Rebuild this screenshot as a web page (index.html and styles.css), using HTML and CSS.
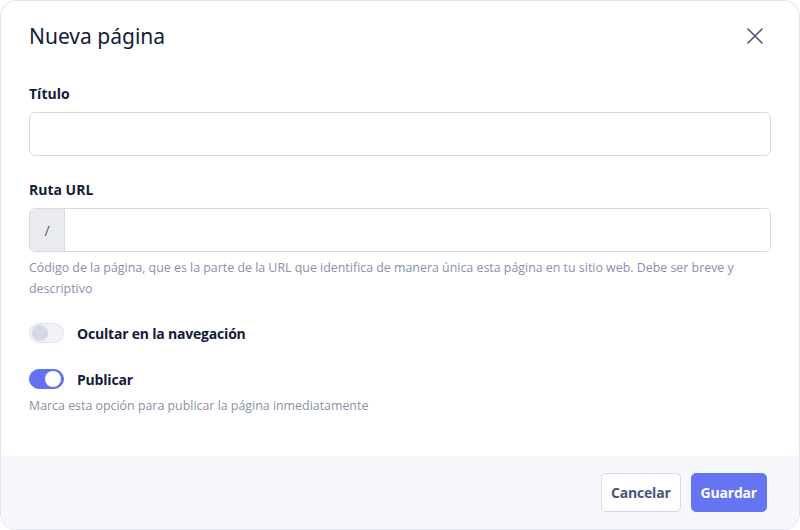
FILE: index.html
```html
<!DOCTYPE html>
<html lang="es">
<head>
    <meta charset="UTF-8">
    <meta name="viewport" content="width=device-width, initial-scale=1.0">
    <title>Nueva página</title>
    <link rel="stylesheet" href="styles.css">
</head>
<body>
    <div class="modal">
        <div class="modal-header">
            <h1>Nueva página</h1>
            <button class="close-btn" aria-label="Cerrar">
                <svg width="18" height="18" viewBox="0 0 18 18" fill="none" stroke="#4a5578" stroke-width="1.6" stroke-linecap="round">
                    <path d="M2 2 L16 16 M16 2 L2 16"/>
                </svg>
            </button>
        </div>

        <div class="modal-body">
            <div class="form-group">
                <label for="titulo">Título</label>
                <input type="text" id="titulo" class="text-input">
            </div>

            <div class="form-group">
                <label for="ruta">Ruta URL</label>
                <div class="input-addon">
                    <span class="addon">/</span>
                    <input type="text" id="ruta">
                </div>
                <p class="help">Código de la página, que es la parte de la URL que identifica de manera única esta página en tu sitio web. Debe ser breve y descriptivo</p>
            </div>

            <div class="toggle-row">
                <span class="toggle"><span class="knob"></span></span>
                <span class="toggle-label">Ocultar en la navegación</span>
            </div>

            <div class="toggle-row on">
                <span class="toggle"><span class="knob"></span></span>
                <span class="toggle-label">Publicar</span>
            </div>
            <p class="help">Marca esta opción para publicar la página inmediatamente</p>
        </div>

        <div class="modal-footer">
            <button class="btn btn-cancel">Cancelar</button>
            <button class="btn btn-save">Guardar</button>
        </div>
    </div>
</body>
</html>
```

FILE: styles.css
```css
* {
    box-sizing: border-box;
    font-family: 'Open Sans', 'Noto Sans', sans-serif;
}

body {
    margin: 0;
    padding: 0;
    background: #ffffff;
}

.modal {
    width: 800px;
    height: 530px;
    border: 1px solid #e1e3ee;
    border-radius: 16px;
    background: white;
    overflow: hidden;
    display: flex;
    flex-direction: column;
}

.modal-header {
    display: flex;
    justify-content: space-between;
    align-items: center;
    padding: 10px 35px 0 28px;
    height: 60px;
}

.modal-header h1 {
    margin: 0;
    font-family: 'Noto Sans', sans-serif;
    font-weight: 400;
    font-size: 21px;
    color: #141b38;
}

.close-btn {
    background: none;
    border: none;
    padding: 0;
    cursor: pointer;
    display: flex;
}

.modal-body {
    padding: 23px 28px 0 28px;
    flex: 1;
}

.form-group {
    margin-bottom: 24px;
}

.form-group label {
    display: block;
    font-size: 14px;
    font-weight: 700;
    color: #141b38;
    margin-bottom: 8px;
    line-height: 20px;
}

.text-input,
.input-addon {
    width: 100%;
    height: 44px;
    border: 1px solid #d6d9e8;
    border-radius: 6px;
    background: white;
}

.input-addon {
    display: flex;
    overflow: hidden;
}

.addon {
    width: 35px;
    background: #e9ebf0;
    border-right: 1px solid #d6d9e8;
    display: flex;
    align-items: center;
    justify-content: center;
    color: #4a5578;
    font-size: 14px;
}

.input-addon input {
    flex: 1;
    border: none;
    outline: none;
}

.help {
    margin: 5px 0 0 0;
    font-size: 12.4px;
    line-height: 21px;
    color: #8a90a8;
}

.toggle-row {
    display: flex;
    align-items: center;
    gap: 13px;
    margin-bottom: 26px;
}

.toggle-row.on {
    margin-bottom: 0;
}

.toggle {
    width: 35px;
    height: 20px;
    border-radius: 10px;
    background: #f1f2f7;
    border: 1px solid #dfe2ec;
    display: flex;
    align-items: center;
    padding: 0 2px;
}

.knob {
    width: 16px;
    height: 16px;
    border-radius: 50%;
    background: #d5d8e5;
}

.toggle-row.on .toggle {
    background: #6271f1;
    border-color: #6271f1;
    justify-content: flex-end;
}

.toggle-row.on .knob {
    background: white;
}

.toggle-label {
    font-size: 14px;
    font-weight: 700;
    letter-spacing: -0.2px;
    color: #141b38;
}

.toggle-row.on + .help {
    margin-top: 6px;
}

.modal-footer {
    height: 73px;
    background: #f7f8fc;
    display: flex;
    justify-content: flex-end;
    align-items: center;
    gap: 10px;
    padding: 0 32px 0 0;
}

.btn {
    height: 39px;
    padding: 0 9px;
    border-radius: 5px;
    font-size: 14px;
    font-weight: 700;
    letter-spacing: -0.2px;
    cursor: pointer;
}

.btn-cancel {
    background: white;
    border: 1px solid #d6d9e8;
    color: #4a5578;
}

.btn-save {
    background: #6474f3;
    border: 1px solid #6474f3;
    color: white;
}
```
